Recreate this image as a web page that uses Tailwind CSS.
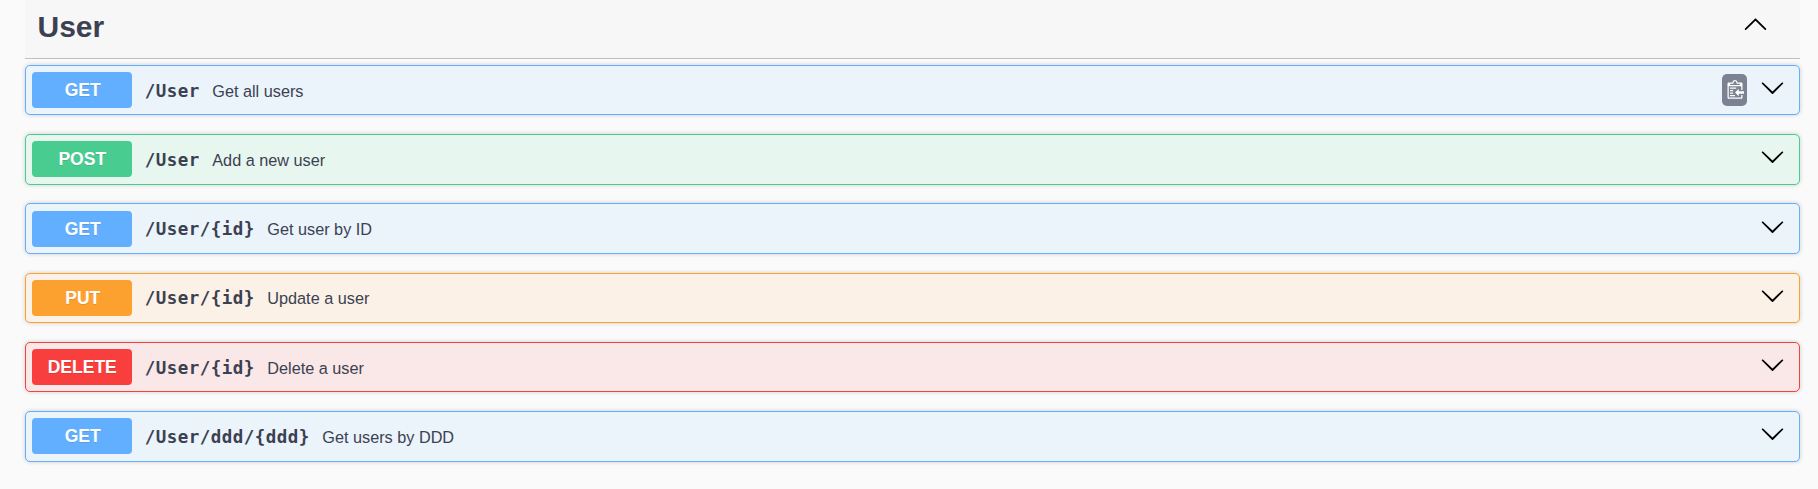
<!DOCTYPE html>
<html lang="en">
<head>
<meta charset="utf-8">
<title>User API</title>
<script src="https://cdn.jsdelivr.net/npm/@tailwindcss/browser@4"></script>
</head>
<body class="bg-[#fafafa] h-[489px] overflow-hidden font-['Liberation_Sans',Arial,sans-serif] text-[#3b4151]">
<svg class="hidden">
  <symbol id="down" viewBox="0 0 20 20"><path d="M17.418 6.109c.272-.268.709-.268.979 0s.271.701 0 .969l-7.908 7.83c-.27.268-.707.268-.979 0l-7.908-7.83c-.27-.268-.27-.701 0-.969.271-.268.709-.268.979 0L10 13.25l7.418-7.141z"/></symbol>
  <symbol id="up" viewBox="0 0 20 20"><path d="M17.418 14.908C17.69 15.176 18.127 15.176 18.397 14.908C18.667 14.64 18.668 14.207 18.397 13.939L10.489 6.109C10.219 5.841 9.782 5.841 9.51 6.109L1.602 13.939C1.332 14.207 1.332 14.64 1.602 14.908C1.873 15.176 2.311 15.176 2.581 14.908L10 7.767L17.418 14.908Z"/></symbol>
</svg>
<main class="ml-[25px] w-[1775px]">
  <header class="flex h-[59px] items-start justify-between border-b border-[#3b4151]/30 bg-black/[0.012] pl-[12.5px] pr-[31.7px]">
    <h3 class="pt-[10px] text-[30px] leading-[34px] font-bold">User</h3>
    <svg class="mt-[11px] size-[25px]"><use href="#up"/></svg>
  </header>
  <section class="flex flex-col gap-[18.75px] pt-[5.75px]">
    <div class="flex h-[50.5px] items-start rounded-[5px] border border-[#61affe] bg-[#ebf3fb] pl-[6.25px] pt-[6.25px] pr-[14.5px] shadow-[0_0_4px_rgba(0,0,0,0.19)]">
      <span class="h-9 w-[100px] shrink-0 rounded-[4px] bg-[#61affe] pl-px text-center text-[17.5px] leading-[36px] font-bold text-white text-shadow-[0_1px_0_rgba(0,0,0,0.1)]">GET</span>
      <span class="pt-[0.75px] pl-[12.5px] font-['DejaVu_Sans_Mono',monospace] text-[17.5px] leading-[36px] font-bold tracking-[0.465px]">/User</span>
      <span class="flex-1 pt-[0.75px] pl-[12.5px] text-[16.25px] leading-[36px]">Get all users</span>
      <span class="mt-[2px] mr-[12.5px] flex h-8 w-[25px] items-start rounded-[5px] bg-[#7d8293] pl-[3px] pt-[6px]">
        <svg class="h-5 w-[18.75px]" viewBox="0 0 15 16"><g transform="translate(2 -1)"><path fill="#fff" fill-rule="evenodd" d="M2 13h4v1H2v-1zm5-6H2v1h5V7zm2 3V8l-3 3 3 3v-2h5v-2H9zM4.5 9H2v1h2.5V9zM2 12h2.5v-1H2v1zm9 1h1v2c-.02.28-.11.52-.3.7-.19.18-.42.28-.7.3H1c-.55 0-1-.45-1-1V4c0-.55.45-1 1-1h3c0-1.11.89-2 2-2 1.11 0 2 .89 2 2h3c.55 0 1 .45 1 1v5h-1V6H1v9h10v-2zM2 5h8c0-.55-.45-1-1-1H8c-.55 0-1-.45-1-1s-.45-1-1-1-1 .45-1 1-.45 1-1 1H3c-.55 0-1 .45-1 1z"/></g></svg>
      </span>
      <svg class="mt-[3px] size-[25px]"><use href="#down"/></svg>
    </div>
    <div class="flex h-[50.5px] items-start rounded-[5px] border border-[#49cc90] bg-[#e8f6f0] pl-[6.25px] pt-[6.25px] pr-[14.5px] shadow-[0_0_4px_rgba(0,0,0,0.19)]">
      <span class="h-9 w-[100px] shrink-0 rounded-[4px] bg-[#49cc90] text-center text-[17.5px] leading-[36px] font-bold text-white text-shadow-[0_1px_0_rgba(0,0,0,0.1)]">POST</span>
      <span class="pt-[0.75px] pl-[12.5px] font-['DejaVu_Sans_Mono',monospace] text-[17.5px] leading-[36px] font-bold tracking-[0.465px]">/User</span>
      <span class="flex-1 pt-[0.5px] pl-[12.5px] text-[16.25px] leading-[36px]">Add a new user</span>
      <svg class="mt-[3px] size-[25px]"><use href="#down"/></svg>
    </div>
    <div class="flex h-[50.5px] items-start rounded-[5px] border border-[#61affe] bg-[#ebf3fb] pl-[6.25px] pt-[6.25px] pr-[14.5px] shadow-[0_0_4px_rgba(0,0,0,0.19)]">
      <span class="h-9 w-[100px] shrink-0 rounded-[4px] bg-[#61affe] pl-px text-center text-[17.5px] leading-[36px] font-bold text-white text-shadow-[0_1px_0_rgba(0,0,0,0.1)]">GET</span>
      <span class="pt-[0.75px] pl-[12.5px] font-['DejaVu_Sans_Mono',monospace] text-[17.5px] leading-[36px] font-bold tracking-[0.465px]">/User/{id}</span>
      <span class="flex-1 pt-[0.75px] pl-[12.5px] text-[16.25px] leading-[36px]">Get user by ID</span>
      <svg class="mt-[3px] size-[25px]"><use href="#down"/></svg>
    </div>
    <div class="flex h-[50.5px] items-start rounded-[5px] border border-[#fca130] bg-[#fbf1e6] pl-[6.25px] pt-[6.25px] pr-[14.5px] shadow-[0_0_4px_rgba(0,0,0,0.19)]">
      <span class="h-9 w-[100px] shrink-0 rounded-[4px] bg-[#fca130] pl-px text-center text-[17.5px] leading-[36px] font-bold text-white text-shadow-[0_1px_0_rgba(0,0,0,0.1)]">PUT</span>
      <span class="pt-[0.5px] pl-[12.5px] font-['DejaVu_Sans_Mono',monospace] text-[17.5px] leading-[36px] font-bold tracking-[0.465px]">/User/{id}</span>
      <span class="flex-1 pt-[0.5px] pl-[12.5px] text-[16.25px] leading-[36px]">Update a user</span>
      <svg class="mt-[3px] size-[25px]"><use href="#down"/></svg>
    </div>
    <div class="flex h-[50.5px] items-start rounded-[5px] border border-[#f93e3e] bg-[#fae7e7] pl-[6.25px] pt-[6.25px] pr-[14.5px] shadow-[0_0_4px_rgba(0,0,0,0.19)]">
      <span class="h-9 w-[100px] shrink-0 rounded-[4px] bg-[#f93e3e] text-center text-[17.5px] leading-[36px] font-bold text-white text-shadow-[0_1px_0_rgba(0,0,0,0.1)]">DELETE</span>
      <span class="pt-[0.75px] pl-[12.5px] font-['DejaVu_Sans_Mono',monospace] text-[17.5px] leading-[36px] font-bold tracking-[0.465px]">/User/{id}</span>
      <span class="flex-1 pt-[0.75px] pl-[12.5px] text-[16.25px] leading-[36px]">Delete a user</span>
      <svg class="mt-[3px] size-[25px]"><use href="#down"/></svg>
    </div>
    <div class="flex h-[50.5px] items-start rounded-[5px] border border-[#61affe] bg-[#ebf3fb] pl-[6.25px] pt-[6.25px] pr-[14.5px] shadow-[0_0_4px_rgba(0,0,0,0.19)]">
      <span class="h-9 w-[100px] shrink-0 rounded-[4px] bg-[#61affe] pl-px text-center text-[17.5px] leading-[36px] font-bold text-white text-shadow-[0_1px_0_rgba(0,0,0,0.1)]">GET</span>
      <span class="pt-[0.75px] pl-[12.5px] font-['DejaVu_Sans_Mono',monospace] text-[17.5px] leading-[36px] font-bold tracking-[0.465px]">/User/ddd/{ddd}</span>
      <span class="flex-1 pt-[0.75px] pl-[12.5px] text-[16.25px] leading-[36px]">Get users by DDD</span>
      <svg class="mt-[3px] size-[25px]"><use href="#down"/></svg>
    </div>
  </section>
</main>
</body>
</html>
